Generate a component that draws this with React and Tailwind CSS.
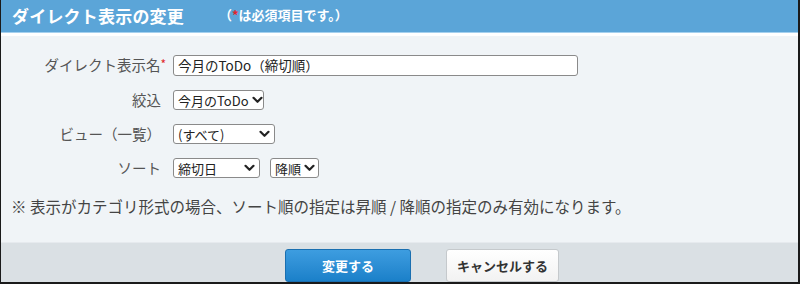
import React from "react";

const Chevron = () => (
  <svg width="11" height="8" viewBox="0 0 11 8" className="shrink-0">
    <path d="M1.5 1.8 L5.5 5.8 L9.5 1.8" fill="none" stroke="#222" strokeWidth="2.2" strokeLinecap="round" strokeLinejoin="round" />
  </svg>
);

const Select = ({ text, w }) => (
  <div
    className={`flex items-center justify-between gap-[3px] h-[20px] border border-[#8a8a8a] rounded-[3px] bg-white pl-[4px] pr-[4px] text-[13px] text-[#222] leading-none whitespace-nowrap ${w}`}
  >
    <span>{text}</span>
    <Chevron />
  </div>
);

export default function App() {
  return (
    <div
      className="w-[800px] h-[284px] flex flex-col bg-[#f0f4f7] border-l border-r-2 border-b-2 border-[#1a1a1a] overflow-hidden"
      style={{ fontFamily: '"Noto Sans CJK JP", "Noto Sans", sans-serif' }}
    >
      <div className="h-[33px] bg-[#5ba5d8] flex items-center pl-[11px] border-b border-[#a5d0ee] shrink-0">
        <span className="text-white font-bold text-[17px] tracking-[0.2px]">ダイレクト表示の変更</span>
        <span className="text-white font-bold text-[13px] ml-[35px] mb-[3px]">
          （<span className="text-[#e0262c]">*</span>は必須項目です。）
        </span>
      </div>
      <div className="h-[3px] bg-white shrink-0" />
      <div className="flex-1 flex flex-col">
        <div className="grid grid-cols-[165px_1fr] gap-x-[7px] gap-y-[14px] pt-[19px] items-center text-[14.5px] text-[#555]">
          <div className="text-right leading-none">
            ダイレクト表示名<span className="text-[#e0262c] align-top text-[12px]">*</span>
          </div>
          <div className="w-[405px] h-[21px] border border-[#8a8a8a] rounded-[3px] bg-white flex items-center pl-[4px] text-[13.5px] text-[#222] leading-none">
            今月のToDo（締切順）
          </div>

          <div className="text-right leading-none pr-[5px]">絞込</div>
          <Select text="今月のToDo" w="w-[91px]" />

          <div className="text-right leading-none pr-[5px]">ビュー（一覧）</div>
          <Select text="(すべて)" w="w-[102px]" />

          <div className="text-right leading-none pr-[5px]">ソート</div>
          <div className="flex gap-[10px]">
            <Select text="締切日" w="w-[87px]" />
            <Select text="降順" w="w-[49px]" />
          </div>
        </div>
        <div className="pl-[10px] pt-[21px] text-[15.5px] text-[#444] leading-none whitespace-nowrap">
          ※ 表示がカテゴリ形式の場合、ソート順の指定は昇順 / 降順の指定のみ有効になります。
        </div>
      </div>
      <div className="h-[40px] bg-[#dae0e4] border-t border-[#e6eaee] flex gap-[35px] pt-[6px] shrink-0 pl-[284px]">
        <button className="w-[126px] h-[33px] rounded-[3px] border border-[#1a6fb0] bg-gradient-to-b from-[#3d9de0] to-[#1a80c9] text-white font-bold text-[13px]">
          変更する
        </button>
        <button className="w-[113px] h-[33px] rounded-[3px] border border-[#c5c9cc] bg-gradient-to-b from-white to-[#f2f2f2] text-[#333] font-bold text-[13px]">
          キャンセルする
        </button>
      </div>
    </div>
  );
}
